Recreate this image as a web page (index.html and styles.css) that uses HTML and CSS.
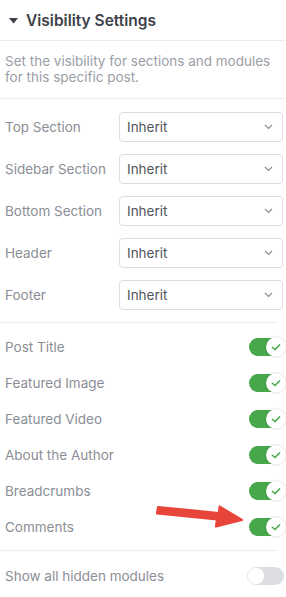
FILE: index.html
```html
<!DOCTYPE html>
<html>
<head>
<meta charset="utf-8">
<link rel="stylesheet" href="styles.css">
</head>
<body>
<div class="panel">
  <div class="head">
    <svg class="caret" width="9" height="6" viewBox="0 0 9 6"><path d="M0 0H9L4.5 5.5Z" fill="#3d4148"/></svg>
    <span class="title">Visibility Settings</span>
  </div>
  <p class="desc">Set the visibility for sections and modules for this specific post.</p>
  <div class="selects">
    <div class="srow"><span class="lbl">Top Section</span><div class="sel"><span>Inherit</span><svg width="9" height="6" viewBox="0 0 9 6"><path d="M1 1L4.5 4.5L8 1" fill="none" stroke="#8a8e96" stroke-width="1.2"/></svg></div></div>
    <div class="srow"><span class="lbl">Sidebar Section</span><div class="sel"><span>Inherit</span><svg width="9" height="6" viewBox="0 0 9 6"><path d="M1 1L4.5 4.5L8 1" fill="none" stroke="#8a8e96" stroke-width="1.2"/></svg></div></div>
    <div class="srow"><span class="lbl">Bottom Section</span><div class="sel"><span>Inherit</span><svg width="9" height="6" viewBox="0 0 9 6"><path d="M1 1L4.5 4.5L8 1" fill="none" stroke="#8a8e96" stroke-width="1.2"/></svg></div></div>
    <div class="srow"><span class="lbl">Header</span><div class="sel"><span>Inherit</span><svg width="9" height="6" viewBox="0 0 9 6"><path d="M1 1L4.5 4.5L8 1" fill="none" stroke="#8a8e96" stroke-width="1.2"/></svg></div></div>
    <div class="srow"><span class="lbl">Footer</span><div class="sel"><span>Inherit</span><svg width="9" height="6" viewBox="0 0 9 6"><path d="M1 1L4.5 4.5L8 1" fill="none" stroke="#8a8e96" stroke-width="1.2"/></svg></div></div>
  </div>
  <div class="toggles">
    <div class="trow"><span class="lbl">Post Title</span><span class="tog on"><span class="knob"><svg width="10" height="8" viewBox="0 0 10 8"><path d="M1 4L4 6.5L9 1.5" fill="none" stroke="#46a84b" stroke-width="1.6"/></svg></span></span></div>
    <div class="trow"><span class="lbl">Featured Image</span><span class="tog on"><span class="knob"><svg width="10" height="8" viewBox="0 0 10 8"><path d="M1 4L4 6.5L9 1.5" fill="none" stroke="#46a84b" stroke-width="1.6"/></svg></span></span></div>
    <div class="trow"><span class="lbl">Featured Video</span><span class="tog on"><span class="knob"><svg width="10" height="8" viewBox="0 0 10 8"><path d="M1 4L4 6.5L9 1.5" fill="none" stroke="#46a84b" stroke-width="1.6"/></svg></span></span></div>
    <div class="trow"><span class="lbl">About the Author</span><span class="tog on"><span class="knob"><svg width="10" height="8" viewBox="0 0 10 8"><path d="M1 4L4 6.5L9 1.5" fill="none" stroke="#46a84b" stroke-width="1.6"/></svg></span></span></div>
    <div class="trow"><span class="lbl">Breadcrumbs</span><span class="tog on"><span class="knob"><svg width="10" height="8" viewBox="0 0 10 8"><path d="M1 4L4 6.5L9 1.5" fill="none" stroke="#46a84b" stroke-width="1.6"/></svg></span></span></div>
    <div class="trow"><span class="lbl">Comments</span><span class="tog on"><span class="knob"><svg width="10" height="8" viewBox="0 0 10 8"><path d="M1 4L4 6.5L9 1.5" fill="none" stroke="#46a84b" stroke-width="1.6"/></svg></span></span>
      <svg class="arrow" width="92" height="26" viewBox="0 0 92 26"><path d="M4 4L65 10L65.5 3.5L88 17L62 23.5L63 16.5L3 10.5Z" fill="#e8453a" stroke="#e8453a" stroke-width="2.2" stroke-linejoin="round"/></svg>
    </div>
  </div>
  <div class="trow last"><span class="lbl">Show all hidden modules</span><span class="tog off"><span class="knob"></span></span></div>
</div>
</body>
</html>
```

FILE: styles.css
```css
* { box-sizing: border-box; }
body {
  margin: 0;
  background: #fff;
  font-family: Inter, "Noto Sans", sans-serif;
  width: 286px;
}
.head {
  display: flex;
  align-items: center;
  height: 41px;
  padding-left: 9px;
  border-bottom: 1px solid #ececec;
}
.caret { margin-right: 8px; margin-top: 1px; }
.title {
  font-size: 15.5px;
  font-weight: 600;
  color: #3d4148;
}
.desc {
  margin: 0;
  padding: 12px 0 13px 5px;
  font-size: 13.5px;
  line-height: 16px;
  color: #9a9ea6;
  border-bottom: 1px solid #ececec;
}
.selects {
  display: flex;
  flex-direction: column;
  gap: 12px;
  padding: 13px 3px 12px 5px;
  margin-right: 8px;
  border-bottom: 1px solid #ececec;
}
.srow {
  display: flex;
  align-items: center;
  justify-content: space-between;
}
.lbl {
  font-size: 13.5px;
  color: #8a8e96;
}
.sel {
  width: 164px;
  height: 30px;
  border: 1px solid #dcdee2;
  border-radius: 4px;
  display: flex;
  align-items: center;
  justify-content: space-between;
  padding: 0 9px 0 7px;
  font-size: 13.5px;
  color: #50545c;
  margin-right: -8px;
}
.toggles {
  display: flex;
  flex-direction: column;
  padding: 6px 0 5px 5px;
  border-bottom: 1px solid #ececec;
  margin: 0 8px 0 0;
}
.trow {
  display: flex;
  align-items: center;
  justify-content: space-between;
  height: 36px;
  position: relative;
}
.toggles .trow { margin-right: -8px; }
.trow.last { padding: 0 1px 0 5px; height: 50px; }
.tog {
  width: 36px;
  height: 18px;
  border-radius: 9px;
  position: relative;
  display: block;
  margin-right: 1px;
}
.tog.on { background: #46a84b; }
.tog.off { background: #dcdee2; }
.knob {
  position: absolute;
  top: -1px;
  width: 20px;
  height: 20px;
  border-radius: 50%;
  background: #fff;
  box-shadow: 0 0 2px rgba(0,0,0,0.25);
  display: flex;
  align-items: center;
  justify-content: center;
}
.tog.on .knob { right: -1px; }
.tog.off .knob { left: 0; top: 1px; width: 16px; height: 16px; box-shadow: 0 0 0 1px #e6e7ea; }
.arrow {
  position: absolute;
  left: 149px;
  top: -6px;
}
```
